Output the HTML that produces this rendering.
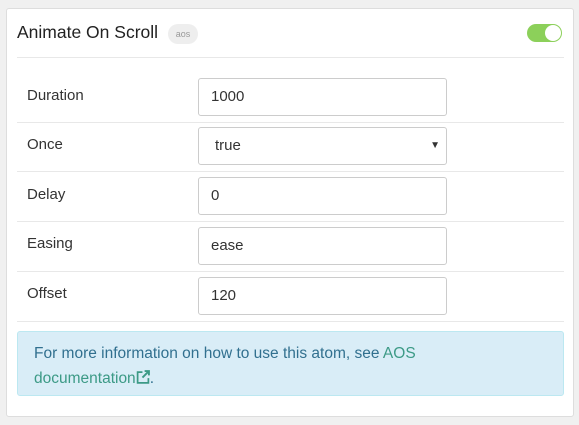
<!DOCTYPE html>
<html><head><style>
body{margin:0;background:#f0f0f0;font-family:"Liberation Sans",sans-serif;width:579px;height:425px;position:relative;overflow:hidden}
.card{position:absolute;left:6px;top:8px;width:566px;height:407px;background:#fff;border:1px solid #ddd;border-radius:3px}
.title{position:absolute;left:10px;top:13px;font-size:17.5px;color:#222}
.badge{position:absolute;left:161px;top:15px;width:30px;height:20px;border-radius:10px;background:#eee;color:#999;font-size:9px;text-align:center;line-height:20px}
.tog{position:absolute;left:520px;top:15px;width:35px;height:18px;border-radius:9px;background:#8cd05a}
.tog:after{content:"";position:absolute;right:1px;top:1px;width:16px;height:16px;border-radius:50%;background:#fff}
.hr{position:absolute;left:10px;width:547px;height:1px;background:#e8e8e8}
.lbl{position:absolute;left:20px;font-size:15px;color:#333}
.inp{position:absolute;left:191px;height:36px;border:1px solid #ccc;border-radius:3px;font-size:15px;color:#333;line-height:36px;padding-left:12px;box-sizing:content-box}
.info{position:absolute;left:10px;top:322px;width:547px;height:65px;background:#d9edf7;border:1px solid #bce8f1;border-radius:3px;color:#31708f;font-size:15.5px;line-height:25px;padding:0 0 0 16px;box-sizing:border-box;padding-top:9px}
.info a{color:#3c9a86;text-decoration:none}
</style></head><body>
<div class="card">
<div class="title">Animate On Scroll</div>
<div class="badge">aos</div>
<div class="tog"></div>
<div class="hr" style="top:48px"></div>
<div class="lbl" style="top:78px">Duration</div><div class="inp" style="top:69px;width:235px">1000</div>
<div class="hr" style="top:113px"></div>
<div class="lbl" style="top:127px">Once</div><div class="inp" style="top:118px;padding-left:16px;width:231px">true<span style="position:absolute;right:6px;font-size:10px">▼</span></div>
<div class="hr" style="top:162px"></div>
<div class="lbl" style="top:177px">Delay</div><div class="inp" style="top:168px;width:235px">0</div>
<div class="hr" style="top:212px"></div>
<div class="lbl" style="top:226px">Easing</div><div class="inp" style="top:218px;width:235px">ease</div>
<div class="hr" style="top:262px"></div>
<div class="lbl" style="top:276px">Offset</div><div class="inp" style="top:268px;width:235px">120</div>
<div class="hr" style="top:312px"></div>
<div class="info">For more information on how to use this atom, see <a>AOS<br>documentation<svg width="14" height="14" viewBox="0 0 13 13" style="vertical-align:-1px"><path d="M6 2H1.5v10h10V7.5" fill="none" stroke="#3c9a86" stroke-width="1.6"/><path d="M8 1h4v4M12 1L6 7" fill="none" stroke="#3c9a86" stroke-width="1.8"/></svg></a>.</div>
</div>
</body></html>
